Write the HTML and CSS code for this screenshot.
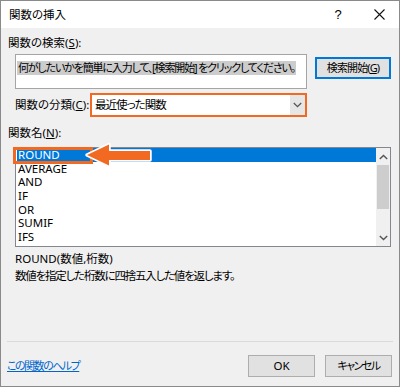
FILE: index.html
```html
<!DOCTYPE html>
<html lang="ja">
<head>
<meta charset="utf-8">
<title>関数の挿入</title>
<link rel="stylesheet" href="styles.css">
</head>
<body>
<div class="dialog">
  <div class="titlebar">
    <span class="title">関数の挿入</span>
    <span class="tb-btn help">?</span>
    <span class="tb-btn close">
      <svg width="11" height="11" viewBox="0 0 11 11"><path d="M0.5 0.5 L10.5 10.5 M10.5 0.5 L0.5 10.5" stroke="#111" stroke-width="1.1" fill="none"/></svg>
    </span>
  </div>
  <div class="content">
    <div class="label label-top">関数の検索(<u>S</u>):</div>
    <div class="search-row">
      <div class="search-box"><span class="sel">何がしたいかを簡単に入力して、[検索開始] をクリックしてください。</span></div>
      <button class="btn btn-default">検索開始(<u>G</u>)</button>
    </div>
    <div class="cat-row">
      <span class="cat-label">関数の分類(<u>C</u>):</span>
      <div class="combo">
        <span class="combo-text">最近使った関数</span>
        <span class="combo-btn">
          <svg width="9" height="6" viewBox="0 0 9 6"><path d="M0.8 1 L4.5 4.6 L8.2 1" stroke="#555" stroke-width="1.3" fill="none"/></svg>
        </span>
      </div>
    </div>
    <div class="label label-list">関数名(<u>N</u>):</div>
    <div class="listbox">
      <ul class="items">
        <li class="selected">ROUND</li>
        <li>AVERAGE</li>
        <li>AND</li>
        <li>IF</li>
        <li>OR</li>
        <li>SUMIF</li>
        <li>IFS</li>
      </ul>
      <div class="scrollbar">
        <span class="sb-arrow">
          <svg width="9" height="6" viewBox="0 0 9 6"><path d="M0.8 5 L4.5 1.4 L8.2 5" stroke="#555" stroke-width="1.4" fill="none"/></svg>
        </span>
        <span class="sb-track"><span class="sb-thumb"></span></span>
        <span class="sb-arrow">
          <svg width="9" height="6" viewBox="0 0 9 6"><path d="M0.8 1 L4.5 4.6 L8.2 1" stroke="#555" stroke-width="1.4" fill="none"/></svg>
        </span>
      </div>
    </div>
    <div class="desc">
      <div class="desc-line">ROUND(数値,桁数)</div>
      <div class="desc-line tight">数値を指定した桁数に四捨五入した値を返します。</div>
    </div>
    <div class="sep"></div>
    <div class="footer">
      <a class="help-link" href="#">この関数のヘルプ</a>
      <div class="buttons">
        <button class="btn btn-foot">OK</button>
        <button class="btn btn-foot btn-cancel">キャンセル</button>
      </div>
    </div>
  </div>
  <div class="annot-rect"></div>
  <svg class="annot-arrow" width="80" height="32" viewBox="0 0 80 32">
    <polygon points="6,16 28,5.5 28,12 69,12 69,21 28,21 28,26.5" fill="#f26a21" stroke="#fff" stroke-width="3.5" stroke-linejoin="round" paint-order="stroke"/>
  </svg>
</div>
</body>
</html>
```

FILE: styles.css
```css
* { box-sizing: border-box; }

body {
  margin: 0;
  font-family: "Noto Sans", "Noto Sans CJK JP", sans-serif;
  font-size: 11px;
  color: #000;
  font-feature-settings: "palt";
}

.dialog {
  position: relative;
  width: 400px;
  height: 387px;
  border: 1px solid #8a8a8a;
  background: #f0f0f0;
  display: flex;
  flex-direction: column;
}

.titlebar {
  height: 27px;
  background: #fff;
  display: flex;
  align-items: center;
  padding-left: 8px;
}

.title {
  flex: 1;
  font-size: 11.5px;
  line-height: 16px;
}

.tb-btn {
  width: 40px;
  height: 27px;
  display: flex;
  align-items: center;
  justify-content: center;
}

.help {
  margin-right: 1px;
  font-family: "Liberation Sans", sans-serif;
  font-size: 13px;
}

.content {
  flex: 1;
  padding: 0 7px;
}

.label {
  font-size: 11.5px;
  line-height: 16px;
  white-space: nowrap;
}

.label-top { margin-top: 7px; }

.search-row {
  display: flex;
  align-items: flex-start;
  gap: 8px;
  margin-top: 3px;
  padding-left: 7px;
}

.search-box {
  width: 292px;
  flex-shrink: 0;
  height: 35px;
  background: #fff;
  border: 1px solid #a5a5a5;
  padding: 5px 0 0 1px;
  overflow: hidden;
}

.sel {
  display: inline-block;
  background: #cccccc;
  height: 14px;
  line-height: 14px;
  padding-left: 1px;
  padding-right: 1px;
  font-size: 11px;
  white-space: nowrap;
  letter-spacing: -1.15px;
}

.btn {
  font-family: inherit;
  font-size: 11.5px;
  font-feature-settings: "palt";
  color: #000;
  background: #e1e1e1;
  border: 1px solid #adadad;
  padding: 0;
  margin: 0;
  height: 22px;
  line-height: 18px;
  white-space: nowrap;
}

.btn-default {
  width: 76px;
  flex-shrink: 0;
  margin-top: 3px;
  border: 2px solid #0078d7;
  font-size: 11px;
  letter-spacing: -0.9px;
}

.cat-row {
  display: flex;
  align-items: center;
  margin-top: 4px;
  padding-left: 7px;
}

.cat-label {
  width: 75px;
  flex-shrink: 0;
  font-size: 11.5px;
  line-height: 16px;
  white-space: nowrap;
}

.combo {
  width: 217px;
  flex-shrink: 0;
  height: 24px;
  border: 2px solid #f26a21;
  background: #fff;
  display: flex;
}

.combo-text {
  flex: 1;
  padding-left: 3px;
  font-size: 11.5px;
  line-height: 20px;
  letter-spacing: -1px;
}

.combo-btn {
  width: 15px;
  background: #e6e6e6;
  display: flex;
  align-items: center;
  justify-content: center;
}

.label-list { margin-top: 8px; }

.listbox {
  margin: 6px 0 0 7px;
  width: 376px;
  height: 100px;
  border: 1px solid #828790;
  background: #fff;
  display: flex;
  padding-left: 1px;
}

.items {
  list-style: none;
  margin: 0;
  padding: 0;
  flex: 1;
}

.items li {
  height: 13.67px;
  line-height: 13.67px;
  padding-left: 1px;
  font-size: 11.5px;
}

.items li.selected {
  background: #0078d7;
  color: #fff;
}

.scrollbar {
  width: 14px;
  background: #f0f0f0;
  display: flex;
  flex-direction: column;
}

.sb-arrow {
  height: 17px;
  display: flex;
  align-items: center;
  justify-content: center;
}

.sb-track {
  flex: 1;
  padding: 0 1px;
}

.sb-thumb {
  display: block;
  height: 44px;
  background: #cdcdcd;
}

.desc {
  margin-top: 2.5px;
  padding-left: 7px;
  font-size: 11.5px;
}

.desc-line { line-height: 17px; }

.tight { letter-spacing: -1.2px; }

.sep {
  margin: 57px 0 0 -1px;
  width: 386px;
  border-top: 1px solid #dadada;
}

.footer {
  margin-top: 13px;
  display: flex;
  align-items: center;
  justify-content: space-between;
}

.help-link {
  margin-left: -1px;
  color: #0066cc;
  text-decoration: underline;
  font-size: 11px;
  line-height: 16px;
  letter-spacing: -1.5px;
}

.buttons {
  display: flex;
  gap: 10px;
}

.btn-foot { width: 67px; }

.btn-cancel {
  font-size: 11px;
  letter-spacing: -1.5px;
}

.annot-rect {
  position: absolute;
  left: 12px;
  top: 146px;
  width: 80px;
  height: 17px;
  border: 3px solid #f26a21;
}

.annot-arrow {
  position: absolute;
  left: 80px;
  top: 138px;
}
```
